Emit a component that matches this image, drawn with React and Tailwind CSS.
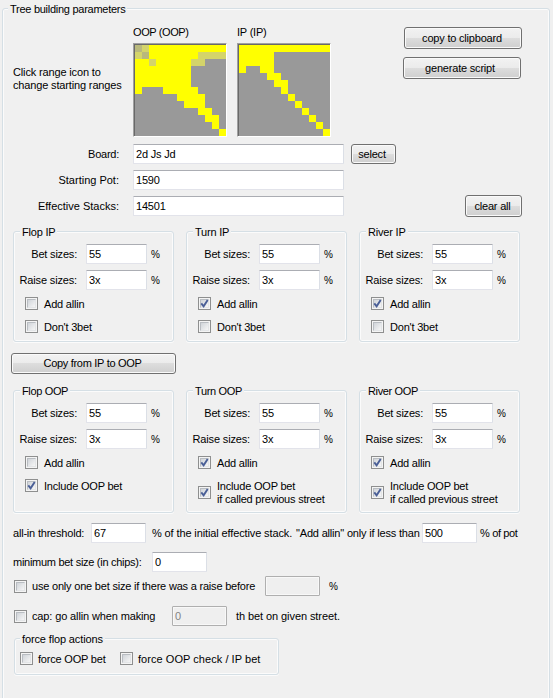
import React, { useState } from 'react';
import clsx from 'clsx';

// y = in range, h / m = partially in range, . = not in range
const OOP_RANGE = [
    'mhyyyyyyyyyyy',
    'hmyyyyyyyhhhh',
    'yyhyyyyyhh...',
    'yyyyyyyy.....',
    'yyyyyyyy.....',
    'yyyyyyyy.....',
    'y...yyyyy....',
    '......yyyy...',
    '.......yyy...',
    '.........yy..',
    '..........yy.',
    '...........y.',
    '............y',
];

const IP_RANGE = [
    'yyyyyyyyyyyyy',
    'yyyyy........',
    'yyyyy........',
    'y..yy........',
    '....yy.......',
    '.....yy......',
    '......y......',
    '.......y.....',
    '........y....',
    '.........y...',
    '..........y..',
    '...........y.',
    '............y',
];

const CELL_COLORS = {
    y: 'bg-[#ffff00]',
    h: 'bg-[#d4d46a]',
    m: 'bg-[#b9b97c]',
    '.': 'bg-[#999999]',
};

const RangeIcon = ({ range }) => (
    <div className="w-[94px] h-[94px] border border-[#a0a0a0] border-r-white border-b-white">
        <div className="w-[92px] h-[92px] border-t border-l border-[#696969] grid grid-cols-13">
            {range.join('').split('').map((cell, i) => (
                <div key={i} className={clsx('w-[7px] h-[7px]', CELL_COLORS[cell])} />
            ))}
        </div>
    </div>
);

const Button = ({ children, className }) => (
    <button
        className={clsx(
            'shrink-0 flex items-center justify-center rounded-[3px] border border-[#707070] whitespace-nowrap',
            'bg-[linear-gradient(#f2f2f2,#ebebeb_50%,#dddddd_50%,#cfcfcf)] shadow-[inset_0_0_0_1px_#fafafa]',
            className
        )}
    >
        {children}
    </button>
);

const TextBox = ({ value = '', disabled, className }) => (
    <input
        defaultValue={value}
        disabled={disabled}
        className={clsx(
            'shrink-0 h-5 pl-[2px] border outline-none rounded-[1px]',
            disabled
                ? 'bg-[#efefef] border-[#afafaf] text-[#838383] shadow-[inset_0_0_0_1px_#f8f8f8]'
                : 'bg-white border-[#e2e3ea] border-t-[#abadb3] border-r-[#dbdfe6]',
            className
        )}
    />
);

const CheckBox = ({ checked: initial = false }) => {
    const [checked, setChecked] = useState(initial);

    return (
        <button
            role="checkbox"
            aria-checked={checked}
            onClick={() => setChecked(!checked)}
            className="shrink-0 w-[13px] h-[13px] border border-[#8e8f8f] bg-[#f4f4f4] p-px"
        >
            <span className="block w-[9px] h-[9px] border border-[#b9bdc2] border-r-[#e3e5e7] border-b-[#e3e5e7] bg-linear-to-br from-[#d0d4d9] to-[#f6f6f6]">
                {checked && (
                    <svg viewBox="0 0 9 9" className="block w-[9px] h-[9px] -m-px">
                        <path d="M1.3 4.4 L3.6 7.3 L7.7 0.9" fill="none" stroke="#4a5f97" strokeWidth="1.9" />
                    </svg>
                )}
            </span>
        </button>
    );
};

const GroupBox = ({ title, className, titleClass, children }) => (
    <fieldset
        className={clsx(
            'shrink-0 relative rounded-[3px] border border-[#d5dfe5] shadow-[inset_0_0_0_1px_#fbfbfb,0_1px_0_#fbfbfb]',
            className
        )}
    >
        <span className={clsx('absolute -top-[7px] left-[6px] px-[2px] h-[14px] leading-[14px] bg-[#f0f0f0] whitespace-nowrap', titleClass)}>
            {title}
        </span>
        {children}
    </fieldset>
);

const Check = ({ checked, label, className, labelClass }) => (
    <div className={clsx('flex items-center h-[13px] gap-[6px] pl-[11px]', className)}>
        <CheckBox checked={checked} />
        <span className={clsx('whitespace-pre leading-[13px] pt-px', labelClass)}>{label}</span>
    </div>
);

const SizeRow = ({ label, value, className, labelClass }) => (
    <div className={clsx('flex items-center h-5', className)}>
        <span className={clsx('w-[63px] flex justify-end whitespace-nowrap', labelClass)}>{label}</span>
        <TextBox value={value} className="w-[61px] ml-[9px]" />
        <span className="ml-[4px] text-[10px]">%</span>
    </div>
);

const Street = ({ title, titleClass, className, children }) => (
    <GroupBox title={title} titleClass={titleClass} className={clsx('w-[161px] pt-3', className)}>
        <SizeRow label="Bet sizes:" value="55" />
        <SizeRow label="Raise sizes:" value="3x" className="mt-[6px]" labelClass="tracking-[-0.15px]" />
        {children}
    </GroupBox>
);

const Field = ({ label, value, className, labelClass = 'tracking-normal', children }) => (
    <div className={clsx('flex items-center h-5', className)}>
        <span className={clsx('w-[116px] text-right', labelClass)}>{label}</span>
        <TextBox value={value} className="w-[211px] ml-[14px]" />
        {children}
    </div>
);

const App = () => (
    <div className="w-[553px] h-[698px] overflow-hidden bg-[#f0f0f0] pl-[2px] pt-2 font-['Liberation_Sans',Arial,sans-serif] text-[11px] leading-[13px] tracking-[-0.2px] text-black">
        <GroupBox
            title="Tree building parameters"
            className="w-[548px] h-[710px]"
            titleClass="left-[5px]! tracking-[-0.27px]"
        >
            <div className="flex h-[118px] pl-[10px] pt-[17px]">
                <p className="w-[120px] pt-[40px] leading-[13px] whitespace-nowrap tracking-[-0.15px]">
                    Click range icon to<br />change starting ranges
                </p>
                <div className="w-[104px]">
                    <div className="h-[17px] tracking-[-0.4px]">OOP (OOP)</div>
                    <RangeIcon range={OOP_RANGE} />
                </div>
                <div className="w-[166px]">
                    <div className="h-[17px]">IP (IP)</div>
                    <RangeIcon range={IP_RANGE} />
                </div>
                <div className="flex flex-col pt-px gap-2">
                    <Button className="w-[118px] h-[22px] ml-px pr-[2px]">copy to clipboard</Button>
                    <Button className="w-[118px] h-[22px] pr-[4px]">generate script</Button>
                </div>
            </div>

            <Field label="Board:" value="2d Js Jd" className="mt-[17px]" labelClass="tracking-[-0.25px]">
                <Button className="w-[45px] h-5 ml-[7px] pr-[3px]">select</Button>
            </Field>
            <Field label="Starting Pot:" value="1590" className="mt-[6px]" />
            <Field label="Effective Stacks:" value="14501" className="mt-[6px]">
                <Button className="w-[57px] h-[22px] ml-[121px] pr-[2px]">clear all</Button>
            </Field>

            <div className="flex gap-3 pl-[10px] mt-[15px]">
                <Street title="Flop IP" className="h-[111px]">
                    <Check label="Add allin" className="mt-[7px]" />
                    <Check label="Don't 3bet" className="mt-[10px]" />
                </Street>
                <Street title="Turn IP" className="h-[111px]">
                    <Check checked label="Add allin" className="mt-[7px]" />
                    <Check label="Don't 3bet" className="mt-[10px]" />
                </Street>
                <Street title="River IP" className="h-[111px]">
                    <Check checked label="Add allin" className="mt-[7px]" />
                    <Check label="Don't 3bet" className="mt-[10px]" />
                </Street>
            </div>

            <Button className="w-[165px] h-[21px] ml-2 mt-[11px] pr-[2px] tracking-[-0.3px]">Copy from IP to OOP</Button>

            <div className="flex gap-3 pl-[10px] mt-4">
                <Street title="Flop OOP" titleClass="tracking-[-0.35px]" className="h-[123px]">
                    <Check label="Add allin" className="mt-[7px]" />
                    <Check checked label="Include OOP bet" className="mt-[10px]" />
                </Street>
                <Street title="Turn OOP" titleClass="tracking-[-0.35px]" className="h-[123px]">
                    <Check checked label="Add allin" className="mt-[7px]" />
                    <Check checked label={'Include OOP bet\nif called previous street'} className="mt-[17px]" />
                </Street>
                <Street title="River OOP" titleClass="tracking-[-0.35px]" className="h-[123px]">
                    <Check checked label="Add allin" className="mt-[7px]" />
                    <Check checked label={'Include OOP bet\nif called previous street'} className="mt-[17px]" />
                </Street>
            </div>

            <div className="flex items-center h-5 mt-[10px] pl-[10px] whitespace-nowrap">
                <span className="w-[78px] pt-px">all-in threshold:</span>
                <TextBox value="67" className="w-[55px]" />
                <span className="w-[144px] ml-[6px] pt-px tracking-[-0.12px]">% of the initial effective stack.</span>
                <span className="w-[126px] tracking-[-0.18px]">"Add allin" only if less than</span>
                <TextBox value="500" className="w-[55px]" />
                <span className="ml-[3px] tracking-[-0.35px]">% of pot</span>
            </div>

            <div className="flex items-center h-5 mt-[9px] pl-[10px] whitespace-nowrap">
                <span className="w-[139px] tracking-[-0.28px]">minimum bet size (in chips):</span>
                <TextBox value="0" className="w-[55px]" />
            </div>

            <div className="flex items-center h-5 mt-1 pl-[11px] whitespace-nowrap">
                <CheckBox />
                <span className="w-[233px] ml-[5px]">use only one bet size if there was a raise before</span>
                <TextBox disabled className="w-[55px]" />
                <span className="ml-[9px] text-[10px]">%</span>
            </div>

            <div className="flex items-center h-5 mt-[10px] pl-[11px] whitespace-nowrap">
                <CheckBox />
                <span className="w-[140px] ml-[5px] tracking-[-0.13px]">cap: go allin when making</span>
                <TextBox value="0" disabled className="w-[55px]" />
                <span className="ml-[9px] tracking-[-0.08px]">th bet on given street.</span>
            </div>

            <GroupBox title="force flop actions" className="w-[265px] h-[37px] ml-[11px] mt-3 pt-[13px] flex" titleClass="left-[5px]! tracking-[-0.13px]">
                <div className="w-[100px]">
                    <Check label="force OOP bet" className="pl-[5px]! gap-[5px]!" />
                </div>
                <Check label="force OOP check / IP bet" className="pl-[5px]! gap-[5px]! whitespace-nowrap" labelClass="tracking-[0.05px]" />
            </GroupBox>
        </GroupBox>
    </div>
);

export default App;
